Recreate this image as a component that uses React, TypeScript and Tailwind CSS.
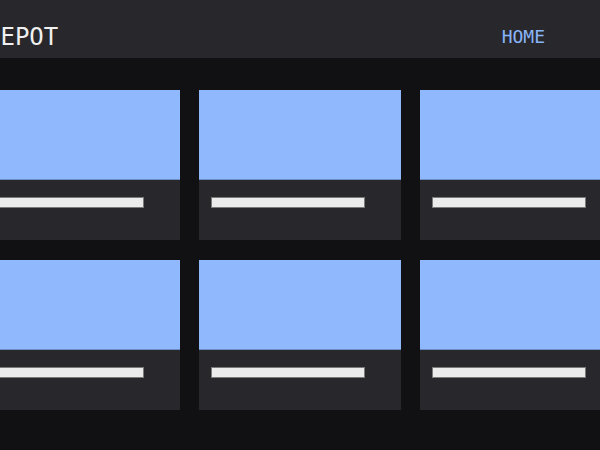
const cards = [1, 2, 3, 4, 5, 6]

export default function App() {
  return (
    <div className="h-[450px] w-[600px] overflow-hidden bg-[#111113] font-['DejaVu_Sans_Mono',monospace]">
      {/* Top bar */}
      <header className="h-[58px] bg-[#28282c] flex justify-center">
        <div className="w-[644px] shrink-0 flex items-center justify-between pl-[8px] pr-[77px] pt-[16px]">
          <span className="text-[24px] leading-8 text-[#f0f0f0]">DEPOT</span>
          <span className="text-[18px] leading-6 text-[#8ab4f8]">HOME</span>
        </div>
      </header>

      {/* Grid */}
      <main className="flex justify-center pt-[32px]">
        <div className="w-[644px] shrink-0 grid grid-cols-[202px_202px_202px] gap-x-[19px] gap-y-[20px]">
          {cards.map((c) => (
            <div key={c} className="h-[150px] flex flex-col">
              <div className="h-[90px] bg-[#8fb8fd] border-b border-[#6d8dc2]" />
              <div className="flex-1 bg-[#28282c] pl-[12px] pt-[17px]">
                <div className="w-[154px] h-[11px] bg-[#ebebeb] border border-[#7a7a7a]" />
              </div>
            </div>
          ))}
        </div>
      </main>
    </div>
  )
}
